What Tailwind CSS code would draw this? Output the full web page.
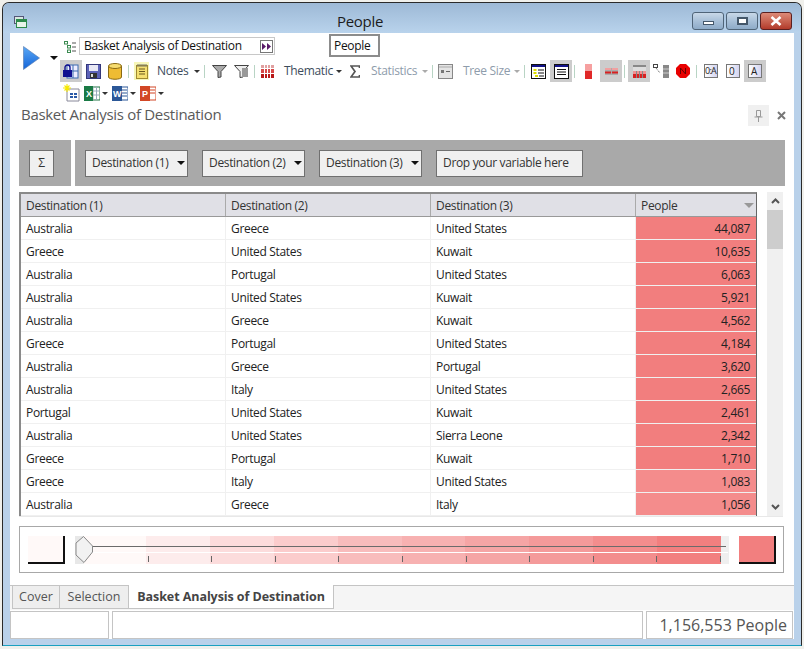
<!DOCTYPE html>
<html lang="en">
<head>
    <meta charset="UTF-8">
    <title>People</title>
    <script src="https://cdn.jsdelivr.net/npm/@tailwindcss/browser@4"></script>
</head>
<body class="bg-[#f0f0ec] w-[804px] h-[649px] overflow-hidden font-['Open_Sans',sans-serif] text-[12px] tracking-[-0.33px] text-[#222]">
<div class="mt-[2px] ml-[2px] w-[800px] h-[644px] border border-[#2a2a2a] border-b-[#1aa0c0] rounded-t-[7px] bg-[#b9d1ea] flex flex-col overflow-hidden">
    <!-- title bar -->
    <div class="h-[30px] shrink-0 flex bg-gradient-to-b from-[#9db9d6] to-[#b9d3ec] relative">
        <svg class="ml-[11px] mt-[13px]" width="13" height="12" viewBox="0 0 13 12"><rect x="0.5" y="0.5" width="9" height="7" fill="#d8e8e0" stroke="#557"/><rect x="2.5" y="3.5" width="10" height="8" fill="#e8f4e8" stroke="#2c8a4a"/><rect x="3" y="4" width="9" height="2" fill="#2c8a4a"/></svg>
        <div class="ml-[310px] mt-[8px] text-[15px] leading-[20px] tracking-[-0.3px] text-[#1c1c1c]">People</div>
        <div class="ml-auto mr-[9px] mt-[9px] flex gap-[2px] h-[18px]">
            <div class="w-[32px] border border-[#4f6478] rounded-[3px] bg-gradient-to-b from-[#c8d8e8] via-[#a8c0d8] to-[#8eabc8] flex items-center justify-center"><div class="w-[11px] h-[4px] bg-white border border-[#44576a] mt-[3px]"></div></div>
            <div class="w-[32px] border border-[#4f6478] rounded-[3px] bg-gradient-to-b from-[#c8d8e8] via-[#a8c0d8] to-[#8eabc8] flex items-center justify-center"><div class="w-[11px] h-[8px] bg-white border-2 border-[#44576a]"></div></div>
            <div class="w-[32px] border border-[#5a2020] rounded-[3px] bg-gradient-to-b from-[#dc8a78] to-[#b23a2a] flex items-center justify-center"><svg width="12" height="10" viewBox="0 0 12 10"><path d="M1.5 1l9 8M10.500 1l-9 8" stroke="#fff" stroke-width="2.600"/></svg></div>
        </div>
    </div>
    <!-- client -->
    <div class="mx-[7px] w-[784px] h-[606px] bg-white flex flex-col shrink-0">
        <!-- toolbars -->
        <div class="h-[71px] flex shrink-0">
            <div class="w-[50px] shrink-0 flex">
                <svg class="ml-[13px] mt-[13px]" width="17" height="24" viewBox="0 0 17 24"><defs><linearGradient id="pl" x1="0" y1="0" x2="0" y2="1"><stop offset="0" stop-color="#5aa8f5"/><stop offset="1" stop-color="#1464d8"/></linearGradient></defs><path d="M.5 .5L16.500 12 .5 23.500Z" fill="url(#pl)" stroke="#5577aa" stroke-width=".6"/></svg>
                <div class="ml-[10px] mt-[23px] w-0 h-0 border-x-[4px] border-x-transparent border-t-[4px] border-t-[#111]"></div>
            </div>
            <div class="flex flex-col">
                <!-- row 1 -->
                <div class="h-[21px] mt-[3px] flex items-center relative">
                    <svg class="ml-[4px]" width="12" height="12" viewBox="0 0 12 12" fill="none" stroke="#3a8a50"><rect x=".5" y=".5" width="3" height="2.500"/><rect x="3.500" y="4.500" width="3" height="2.500"/><rect x="3.500" y="9" width="3" height="2.500"/><path d="M8 2h4M8 6h4M8 10h4" stroke="#555"/></svg>
                    <div class="ml-[3px] self-start mt-[1px] w-[196px] h-[18px] border border-[#c8c8c8] pl-[4px] pb-px flex items-center leading-[15px] text-[#111] relative">Basket Analysis of Destination
                        <div class="ml-auto mr-[1px] mt-px w-[13px] h-[13px] border border-[#777] flex items-center justify-center"><svg width="9" height="7" viewBox="0 0 9 7" fill="#5a1a6a"><path d="M0 0l4 3.500L0 7zM5 0l4 3.500L5 7z"/></svg></div>
                    </div>
                    <div class="ml-[54px] self-start -mt-[2px] w-[51px] h-[23px] border-2 border-[#8c8c8c] flex items-center pl-[3px] text-[#111]">People</div>
                </div>
                <!-- row 2 -->
                <div class="h-[22px] mt-[3px] flex items-center whitespace-nowrap text-[#3d4c5c] w-[724px]">
                    <div class="w-[22px] h-[22px] bg-[#cccccc] flex items-center justify-center shrink-0">
                        <svg width="16" height="15" viewBox="0 0 16 15"><rect x="4" y="1" width="11" height="13" fill="#eef" stroke="#3b6ab0"/><path d="M10 1v13M4 7h11" stroke="#3b6ab0"/><rect x="0" y="6" width="9" height="7" fill="#101090"/><path d="M2 6V3.500a2.500 2.500 0 015 0V6" fill="none" stroke="#101090" stroke-width="1.400"/></svg>
                    </div>
                    <svg class="ml-[4px] shrink-0" width="15" height="15" viewBox="0 0 15 15"><rect x=".5" y=".5" width="14" height="14" fill="#5c62b8" stroke="#33377a"/><rect x="3" y="1" width="9" height="6" fill="#e8e8f4"/><rect x="4" y="9" width="7" height="5" fill="#333"/><rect x="5" y="10" width="2" height="3" fill="#ddd"/></svg>
                    <svg class="ml-[7px] shrink-0" width="14" height="17" viewBox="0 0 14 17"><path d="M.5 3v11c0 3 13 3 13 0V3" fill="#eebc33" stroke="#8a6a14"/><ellipse cx="7" cy="3" rx="6.500" ry="2.500" fill="#f6dc70" stroke="#8a6a14"/></svg>
                    <div class="ml-[6px] w-px h-[13px] bg-[#b8d4c4] shrink-0"></div>
                    <div class="ml-[5px] w-[15px] h-[18px] bg-[#f6f6b8] flex items-center justify-center shrink-0">
                        <svg width="12" height="15" viewBox="0 0 12 15"><rect x=".5" y="1.500" width="11" height="13" fill="#f4e070" stroke="#a08a30"/><path d="M3 5h6M3 7.500h6M3 10h6" stroke="#6a5a20"/><path d="M2 0v3M4 0v3M6 0v3M8 0v3M10 0v3" stroke="#776"/></svg>
                    </div>
                    <div class="ml-[8px] w-[36px] shrink-0">Notes</div>
                    <div class="ml-[1px] w-0 h-0 border-x-[3.500px] border-x-transparent border-t-[3.500px] border-t-[#333] shrink-0"></div>
                    <div class="ml-[4px] w-px h-[13px] bg-[#b8d4c4] shrink-0"></div>
                    <svg class="ml-[7px] shrink-0" width="15" height="13" viewBox="0 0 15 13"><path d="M.5 .5h14L9 6.500V12L6 12.500V6.500Z" fill="#aaa" stroke="#444"/></svg>
                    <svg class="ml-[7px] shrink-0" width="15" height="13" viewBox="0 0 15 13"><path d="M.5 .5h14L9 6.500V12L6 12.500V6.500Z" fill="#eee" stroke="#444"/><path d="M8 3h6v9H8z" fill="#999"/></svg>
                    <div class="ml-[5px] w-px h-[13px] bg-[#b8d4c4] shrink-0"></div>
                    <svg class="ml-[6px] shrink-0" width="13" height="13" viewBox="0 0 13 13"><rect width="13" height="13" fill="#fff"/><path d="M0 0h13v3H0z" fill="#e0a0a0"/><path d="M0 4h13v4H0z" fill="#d84848"/><path d="M0 9h13v4H0z" fill="#b81818"/><path d="M3.500 0v13M6.500 0v13M9.500 0v13M0 3.500h13M0 8.500h13" stroke="#fff"/></svg>
                    <div class="ml-[10px] w-[48px] shrink-0">Thematic</div>
                    <div class="ml-[4px] w-0 h-0 border-x-[3.500px] border-x-transparent border-t-[3.500px] border-t-[#333] shrink-0"></div>
                    <svg class="ml-[8px] shrink-0" width="10" height="13" viewBox="0 0 10 13"><path d="M9.500 3V1H1l4 5.500L1 12h8.500v-2" fill="none" stroke="#555" stroke-width="1.700"/></svg>
                    <div class="ml-[11px] w-[46px] shrink-0 text-[#8e9cab]">Statistics</div>
                    <div class="ml-[5px] w-0 h-0 border-x-[3.500px] border-x-transparent border-t-[3.500px] border-t-[#aaa] shrink-0"></div>
                    <div class="ml-[4px] w-px h-[13px] bg-[#b8d4c4] shrink-0"></div>
                    <svg class="ml-[5px] shrink-0" width="15" height="15" viewBox="0 0 15 15"><rect x=".5" y=".5" width="14" height="14" fill="#e4e4e4" stroke="#888"/><path d="M1 3h13" stroke="#aaa"/><rect x="3" y="6" width="3" height="3" fill="#777"/><path d="M8 7.500h4" stroke="#666"/></svg>
                    <div class="ml-[10px] w-[46px] shrink-0 text-[#8e9cab]">Tree Size</div>
                    <div class="ml-[5px] w-0 h-0 border-x-[3.500px] border-x-transparent border-t-[3.500px] border-t-[#aaa] shrink-0"></div>
                    <div class="ml-[4px] w-px h-[13px] bg-[#b8d4c4] shrink-0"></div>
                    <svg class="ml-[6px] shrink-0" width="15" height="15" viewBox="0 0 15 15"><rect x=".5" y=".5" width="14" height="14" fill="#fff" stroke="#111"/><rect x="1" y="1" width="13" height="2" fill="#12128a"/><rect x="2.500" y="5" width="3" height="2" fill="#dd0"/><rect x="2.500" y="8" width="3" height="2" fill="#dd0"/><rect x="4" y="11" width="3" height="2" fill="#dd0"/><path d="M7 6h6M7 9h6M8 12h5" stroke="#111"/></svg>
                    <div class="ml-[4px] w-[22px] h-[22px] bg-[#cccccc] flex items-center justify-center shrink-0">
                        <svg width="15" height="15" viewBox="0 0 15 15"><rect x=".5" y=".5" width="14" height="14" fill="#fff" stroke="#111"/><rect x="1" y="1" width="13" height="2" fill="#12128a"/><path d="M3 5.500h9M3 8h9M3 10.500h9" stroke="#111"/></svg>
                    </div>
                    <div class="ml-[2px] w-px h-[13px] bg-[#b8d4c4] shrink-0"></div>
                    <svg class="ml-[10px] shrink-0" width="7" height="15" viewBox="0 0 7 15"><rect width="7" height="7" fill="#f6a0a0"/><rect y="7" width="7" height="8" fill="#e02828"/></svg>
                    <div class="ml-[8px] w-[22px] h-[22px] bg-[#cccccc] flex items-center justify-center shrink-0">
                        <svg width="13" height="7" viewBox="0 0 13 7"><rect width="13" height="7" fill="#aaa"/><rect x="0" y="3.500" width="6" height="2" fill="#d82020"/><rect x="7" y="3.500" width="6" height="2" fill="#d82020"/><rect x="0" y="0" width="6" height="2" fill="#f0a0a0"/><rect x="7" y="0" width="6" height="2" fill="#f0a0a0"/></svg>
                    </div>
                    <div class="ml-[2px] w-px h-[13px] bg-[#b8d4c4] shrink-0"></div>
                    <div class="ml-[3px] w-[22px] h-[22px] bg-[#cccccc] flex items-center justify-center shrink-0">
                        <svg width="13" height="13" viewBox="0 0 13 13"><rect width="13" height="13" fill="#888"/><rect y="2" width="13" height="4" fill="#ddd"/><rect y="6" width="13" height="3" fill="#f09090"/><rect y="9" width="13" height="4" fill="#d82020"/><path d="M3.500 6v7M6.500 6v7M9.500 6v7" stroke="#888"/></svg>
                    </div>
                    <svg class="ml-[3px] shrink-0" width="16" height="14" viewBox="0 0 16 14"><rect x=".5" y=".5" width="4" height="3" fill="#fff" stroke="#444"/><path d="M3 4l4 5" stroke="#555" stroke-dasharray="1 1"/><rect x="10" y="1" width="6" height="13" fill="#888"/><path d="M10 5h6M10 9h6" stroke="#ccc"/></svg>
                    <svg class="ml-[7px] shrink-0" width="14" height="14" viewBox="0 0 14 14"><path d="M4 0h6l4 4v6l-4 4H4l-4-4V4z" fill="#e80000"/><path d="M4.500 10V4l5 6V4" fill="none" stroke="#600" stroke-width="1"/></svg>
                    <div class="ml-[6px] w-px h-[13px] bg-[#b8d4c4] shrink-0"></div>
                    <div class="ml-[7px] w-[14px] h-[14px] border border-[#777] bg-gradient-to-r from-white to-[#d4d4f0] text-[9px] leading-[12px] tracking-[-0.7px] text-[#222] shrink-0">0:A</div>
                    <div class="ml-[8px] w-[14px] h-[14px] border border-[#777] bg-gradient-to-r from-white to-[#d4d4f0] text-[10px] leading-[12px] text-[#222] pl-[2px] shrink-0">0</div>
                    <div class="ml-[4px] w-[22px] h-[22px] bg-[#cccccc] flex items-center justify-center shrink-0">
                        <div class="w-[14px] h-[14px] border border-[#777] bg-gradient-to-r from-white to-[#d4d4f0] text-[10px] leading-[12px] text-[#222] pl-[2px]">A</div>
                    </div>
                </div>
                <!-- row 3 -->
                <div class="h-[20px] mt-[1px] flex items-center">
                    <svg class="ml-[3px] shrink-0" width="17" height="18" viewBox="0 0 17 18"><path d="M4 5h12v12H4z" fill="#fff" stroke="#889"/><path d="M7 9h3v2H7zM11 9h3v2h-3zM7 12h3v2H7zM11 12h3v2h-3z" fill="#2a5aa8"/><path d="M4 0v8M0 4h8M1.500 1.500l5 5M6.500 1.500l-5 5" stroke="#f6e800" stroke-width="1.100"/></svg>
                    <svg class="ml-[4px] shrink-0" width="16" height="15" viewBox="0 0 16 15"><rect x="5" y="1" width="11" height="13" fill="#fff" stroke="#207245"/><path d="M9 1v13M12.500 1v13M5 5h11M5 9h11" stroke="#9ab"/><rect y="0" width="9" height="15" fill="#1a7a45"/><text x="2" y="11" font-size="9" font-weight="bold" fill="#fff" font-family="Liberation Sans">X</text></svg>
                    <div class="ml-[2px] w-0 h-0 border-x-[3.500px] border-x-transparent border-t-[3.500px] border-t-[#333]"></div>
                    <svg class="ml-[4px] shrink-0" width="16" height="15" viewBox="0 0 16 15"><rect x="5" y="1" width="11" height="13" fill="#fff" stroke="#2b5797"/><path d="M9 4h6M9 7h6M9 10h6" stroke="#2b5797"/><rect y="0" width="10" height="15" fill="#2b5797"/><text x="1" y="11" font-size="9" font-weight="bold" fill="#fff" font-family="Liberation Sans">W</text></svg>
                    <div class="ml-[2px] w-0 h-0 border-x-[3.500px] border-x-transparent border-t-[3.500px] border-t-[#333]"></div>
                    <svg class="ml-[4px] shrink-0" width="16" height="15" viewBox="0 0 16 15"><rect x="5" y="1" width="11" height="13" fill="#fff" stroke="#d24726"/><path d="M10 4h5M10 7h5" stroke="#e8a090" stroke-width="2"/><rect y="0" width="10" height="15" fill="#d24726"/><text x="2" y="11" font-size="9" font-weight="bold" fill="#fff" font-family="Liberation Sans">P</text></svg>
                    <div class="ml-[2px] w-0 h-0 border-x-[3.500px] border-x-transparent border-t-[3.500px] border-t-[#333]"></div>
                </div>
            </div>
        </div>
        <!-- pane title -->
        <div class="h-[23px] flex items-center shrink-0">
            <div class="ml-[11px] -mt-[3px] text-[15px] leading-[20px] tracking-[-0.3px] text-[#5a5a5a]">Basket Analysis of Destination</div>
            <div class="ml-auto mr-[8px] w-[21px] h-[21px] bg-[#f0f0f0] flex items-center justify-center"><svg width="9" height="12" viewBox="0 0 9 12" fill="none" stroke="#999"><path d="M2.500 .5h4v6h-4zM.5 7h8M4.500 7v5"/></svg></div>
            <svg class="mr-[8px]" width="9" height="9" viewBox="0 0 9 9"><path d="M1 1l7 7M8 1l-7 7" stroke="#777" stroke-width="2"/></svg>
        </div>
        <!-- variable bar -->
        <div class="mt-[13px] ml-[9px] flex gap-[4px] h-[46px] shrink-0">
            <div class="w-[52px] bg-[#a9a9a9] flex items-center pl-[10px]">
                <div class="w-[25px] h-[27px] bg-[#f0f0f0] border border-[#707070] flex items-center justify-center text-[#333]">Σ</div>
            </div>
            <div class="w-[710px] bg-[#a9a9a9] flex items-center pl-[10px] gap-[14px] text-[#333]">
                <div class="w-[103px] h-[27px] bg-[#f0f0f0] border border-[#707070] flex items-center pl-[6px]">Destination (1)<div class="ml-auto mr-[2px] w-0 h-0 border-x-[4px] border-x-transparent border-t-[4px] border-t-[#111]"></div></div>
                <div class="w-[103px] h-[27px] bg-[#f0f0f0] border border-[#707070] flex items-center pl-[6px]">Destination (2)<div class="ml-auto mr-[2px] w-0 h-0 border-x-[4px] border-x-transparent border-t-[4px] border-t-[#111]"></div></div>
                <div class="w-[103px] h-[27px] bg-[#f0f0f0] border border-[#707070] flex items-center pl-[6px]">Destination (3)<div class="ml-auto mr-[2px] w-0 h-0 border-x-[4px] border-x-transparent border-t-[4px] border-t-[#111]"></div></div>
                <div class="w-[147px] h-[27px] bg-[#f0f0f0] border border-[#707070] flex items-center pl-[6px]">Drop your variable here</div>
            </div>
        </div>
        <!-- grid -->
        <div class="mt-[6px] ml-[9px] w-[764px] h-[325px] flex shrink-0 border-b border-[#e8e8e8]">
            <div class="w-[738px] border-l-2 border-t-2 border-r border-[#8a8a8a] border-r-[#666] overflow-hidden">
                <div class="h-[23px] flex bg-[#e0e0e6] border-b border-[#999] text-[#333]">
                    <div class="w-[205px] pl-[5px] border-r border-[#aaa] leading-[23px]">Destination (1)</div>
                    <div class="w-[205px] pl-[5px] border-r border-[#aaa] leading-[23px]">Destination (2)</div>
                    <div class="w-[205px] pl-[5px] border-r border-[#aaa] leading-[23px]">Destination (3)</div>
                    <div class="w-[120px] pl-[5px] pt-px flex items-center">People<div class="ml-auto mr-[2px] w-0 h-0 border-x-[5px] border-x-transparent border-t-[5px] border-t-[#999]"></div></div>
                </div>
                <div id="rows"></div>
            </div>
            <div class="ml-[10px] w-[16px] bg-[#f0f0f0] flex flex-col items-center">
                <svg class="mt-[6px]" width="9" height="6" viewBox="0 0 9 6"><path d="M1 5l3.500-3.500L8 5" fill="none" stroke="#555" stroke-width="2"/></svg>
                <div class="mt-[6px] w-[16px] h-[39px] bg-[#cdcdcd]"></div>
                <svg class="mt-auto mb-[6px]" width="9" height="6" viewBox="0 0 9 6"><path d="M1 1l3.500 3.500L8 1" fill="none" stroke="#555" stroke-width="2"/></svg>
            </div>
        </div>
        <!-- legend -->
        <div class="mt-[9px] ml-[9px] w-[765px] h-[47px] border border-[#a8a8a8] flex items-center shrink-0">
            <div class="ml-[8px] w-[37px] h-[28px] bg-[#fff9f8] border-r-2 border-b-2 border-[#111]"></div>
            <div class="ml-[10px] w-[654px] h-[28px] flex relative">
                <div class="w-[71px] bg-[#fff9f8]"></div>
                <div class="w-[64px] bg-[#fdecec]"></div>
                <div class="w-[64px] bg-[#fcdcdc]"></div>
                <div class="w-[64px] bg-[#fbcccc]"></div>
                <div class="w-[64px] bg-[#f8bcbc]"></div>
                <div class="w-[64px] bg-[#f7b1b1]"></div>
                <div class="w-[64px] bg-[#f5a5a5]"></div>
                <div class="w-[64px] bg-[#f49a9a]"></div>
                <div class="w-[64px] bg-[#f38d8d]"></div>
                <div class="w-[64px] bg-[#f27f7f]"></div>
                <div class="w-[8px] bg-[#efefef]"></div>
                <div class="absolute left-[17px] right-[3px] top-[10px] h-px bg-[#6b6b6b]"></div>
                <div class="absolute left-[17px] right-[1px] top-[16px] h-px bg-white"></div>
                <div id="ticks"></div>
                <svg class="absolute left-0 top-0" width="19" height="28" viewBox="0 0 19 28"><path d="M0 0h9v28H0z" fill="#e8e8e8"/><path d="M8.500 .5L17.500 10v6L9 26.500 1 19V7z" fill="#f2f2f2" stroke="#888"/></svg>
            </div>
            <div class="ml-[10px] w-[37px] h-[28px] bg-[#f27f7f] border-r-2 border-b-2 border-[#111]"></div>
        </div>
        <!-- tabs -->
        <div class="mt-[12px] h-[25px] bg-[#f5f5f5] border-t border-[#c4c4c4] flex shrink-0 text-[12.500px] tracking-normal">
            <div class="ml-[2px] w-[48px] h-[23px] border border-t-0 border-[#c4c4c4] bg-[#eeeeee] text-center leading-[22px] text-[#555]">Cover</div>
            <div class="w-[69px] h-[23px] border-r border-b border-[#c4c4c4] bg-[#eeeeee] text-center leading-[22px] text-[#555]">Selection</div>
            <div class="w-[205px] h-[24px] -mt-px bg-white border-r border-b border-[#c4c4c4] text-center leading-[24px] font-bold text-[#444] tracking-[-0.07px]">Basket Analysis of Destination</div>
        </div>
        <!-- status bar -->
        <div class="mt-[1px] flex gap-[3px] h-[28px] shrink-0">
            <div class="w-[99px] border border-[#c4c4c4]"></div>
            <div class="w-[531px] border border-[#c4c4c4]"></div>
            <div class="w-[147px] border border-[#c4c4c4] flex items-center justify-end pr-[5px] text-[16px] tracking-normal text-[#555]">1,156,553 People</div>
        </div>
    </div>
</div>
<script>
    // rows of the grid
    let data = [
        ['Australia', 'Greece', 'United States', '44,087'],
        ['Greece', 'United States', 'Kuwait', '10,635'],
        ['Australia', 'Portugal', 'United States', '6,063'],
        ['Australia', 'United States', 'Kuwait', '5,921'],
        ['Australia', 'Greece', 'Kuwait', '4,562'],
        ['Greece', 'Portugal', 'United States', '4,184'],
        ['Australia', 'Greece', 'Portugal', '3,620'],
        ['Australia', 'Italy', 'United States', '2,665'],
        ['Portugal', 'United States', 'Kuwait', '2,461'],
        ['Australia', 'United States', 'Sierra Leone', '2,342'],
        ['Greece', 'Portugal', 'Kuwait', '1,710'],
        ['Greece', 'Italy', 'United States', '1,083'],
        ['Australia', 'Greece', 'Italy', '1,056']
    ];
    let rows = document.getElementById('rows');
    data.forEach(function(r, i) {
        let col = i >= 11 ? '#f48c8c' : '#f27e7e';
        rows.innerHTML += `
        <div class="h-[23px] flex border-b border-[#f0f0f0] leading-[24px] text-[#222]">
            <div class="w-[205px] pl-[5px] border-r border-[#f0f0f0]">${r[0]}</div>
            <div class="w-[205px] pl-[5px] border-r border-[#f0f0f0]">${r[1]}</div>
            <div class="w-[205px] pl-[5px] border-r border-[#f0f0f0]">${r[2]}</div>
            <div class="w-[120px] pr-[6px] text-right" style="background:${col}">${r[3]}</div>
        </div>`;
    });
    let ticks = document.getElementById('ticks');
    [73, 136, 200, 263, 327, 391, 454, 518, 581, 645].forEach(function(x) {
        ticks.innerHTML += `<div class="absolute top-[20px] w-px h-[6px] bg-[#666]" style="left:${x}px"></div>`;
    });
</script>
</body>
</html>
